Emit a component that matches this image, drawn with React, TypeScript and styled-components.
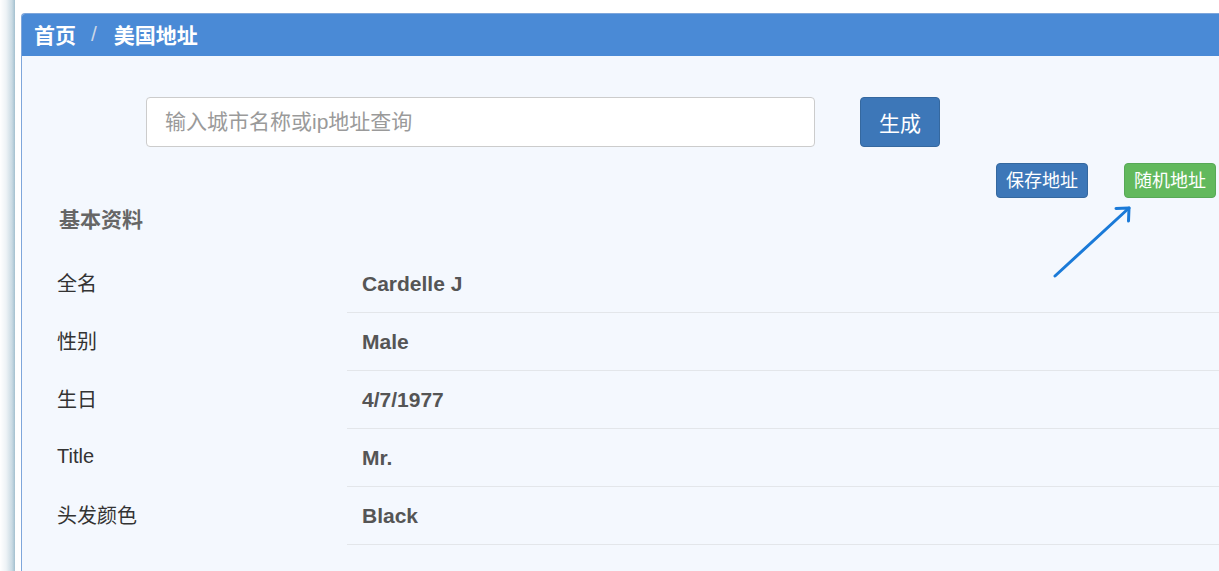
import React from "react";
import styled, { createGlobalStyle } from "styled-components";

const Global = createGlobalStyle`
  html, body { margin: 0; padding: 0; background: #fff; overflow: hidden; }
  body { font-family: "Liberation Sans", Arial, "Noto Sans CJK SC", sans-serif; }
  * { box-sizing: border-box; }
`;

const Page = styled.div`
  display: flex;
  width: 1219px;
  height: 571px;
  overflow: hidden;
  background: #fff;
`;

const SideShadow = styled.div`
  width: 15px;
  flex: none;
  background: linear-gradient(to right, #ffffff 0%, #eef3f6 40%, #c9dae3 80%, #a3c0cf 100%);
`;

const Panel = styled.div`
  margin-left: 6px;
  margin-top: 13px;
  width: 1220px;
  height: 640px;
  flex: none;
  border: 1px solid #7ea6db;
  border-right: none;
  border-radius: 4px 0 0 0;
  background: #f4f8fe;
  display: flex;
  flex-direction: column;
`;

const Header = styled.div`
  height: 42px;
  background: #4a8ad6;
  display: flex;
  align-items: center;
  padding-left: 12px;
  padding-bottom: 2px;
  color: #fff;
  font-size: 21px;
  font-weight: bold;
  border-radius: 3px 0 0 0;
`;

const Sep = styled.span`
  color: #c9d6e6;
  font-weight: normal;
  padding: 0 17px 0 15px;
`;

const Body = styled.div`
  display: flex;
  flex-direction: column;
  padding-top: 41px;
`;

const SearchRow = styled.div`
  display: flex;
  align-items: center;
  padding-left: 124px;
  gap: 45px;
`;

const SearchInput = styled.input`
  width: 669px;
  height: 50px;
  border: 1px solid #cccccc;
  border-radius: 4px;
  background: #fff;
  padding: 0 18px;
  font-size: 21px;
  font-family: "Liberation Sans", "Noto Sans CJK SC", sans-serif;
  color: #333;
  outline: none;
  &::placeholder { color: #9a9a9a; }
`;

const Btn = styled.button<{ $variant: "primary" | "success"; $size: "lg" | "sm" }>`
  border: 1px solid ${(p) => (p.$variant === "primary" ? "#35689f" : "#57a957")};
  background: ${(p) => (p.$variant === "primary" ? "#3d77b8" : "#62b95d")};
  color: #fff;
  border-radius: 4px;
  font-family: "Liberation Sans", "Noto Sans CJK SC", sans-serif;
  font-size: ${(p) => (p.$size === "lg" ? "21px" : "18px")};
  width: ${(p) => (p.$size === "lg" ? "80px" : "92px")};
  height: ${(p) => (p.$size === "lg" ? "50px" : "35px")};
  padding: 0 0 ${(p) => (p.$size === "lg" ? "1px" : "4px")};
  cursor: pointer;
`;

const ActionRow = styled.div`
  display: flex;
  justify-content: flex-end;
  gap: 36px;
  margin-top: 16px;
  padding-right: 3px;
  width: 1197px;
  position: relative;
`;

const ArrowMark = styled.svg`
  position: absolute;
  left: 1030px;
  top: 42px;
`;

const SectionTitle = styled.div`
  margin-top: 10px;
  padding-left: 37px;
  font-size: 21px;
  font-weight: bold;
  color: #666;
  height: 24px;
  line-height: 24px;
`;

const Table = styled.div`
  display: grid;
  grid-template-columns: 325px 1fr;
  margin-top: 23px;
`;

const Label = styled.div`
  height: 58px;
  padding-left: 35px;
  padding-bottom: 4px;
  display: flex;
  align-items: center;
  font-size: 20px;
  color: #333;
`;

const Value = styled.div`
  height: 58px;
  display: flex;
  align-items: center;
  padding-left: 15px;
  font-size: 21px;
  font-weight: bold;
  color: #555;
  border-bottom: 1px solid #e3e6ea;
`;

const rows: [string, string][] = [
  ["全名", "Cardelle J"],
  ["性别", "Male"],
  ["生日", "4/7/1977"],
  ["Title", "Mr."],
  ["头发颜色", "Black"],
];

export default function App() {
  return (
    <>
      <Global />
      <Page>
        <SideShadow />
        <Panel>
          <Header>
            首页<Sep>/</Sep>美国地址
          </Header>
          <Body>
            <SearchRow>
              <SearchInput placeholder="输入城市名称或ip地址查询" />
              <Btn $variant="primary" $size="lg">生成</Btn>
            </SearchRow>
            <ActionRow>
              <Btn $variant="primary" $size="sm">保存地址</Btn>
              <Btn $variant="success" $size="sm">随机地址</Btn>
              <ArrowMark width="80" height="80" viewBox="0 0 80 80">
                <g stroke="#1a7ad8" strokeWidth="3" fill="none" strokeLinecap="round" strokeLinejoin="round">
                  <line x1="3" y1="71" x2="77" y2="3" />
                  <polyline points="64,3.5 77,3 76.5,16" />
                </g>
              </ArrowMark>
            </ActionRow>
            <SectionTitle>基本资料</SectionTitle>
            <Table>
              {rows.map(([k, v]) => (
                <React.Fragment key={k}>
                  <Label>{k}</Label>
                  <Value>{v}</Value>
                </React.Fragment>
              ))}
            </Table>
          </Body>
        </Panel>
      </Page>
    </>
  );
}
